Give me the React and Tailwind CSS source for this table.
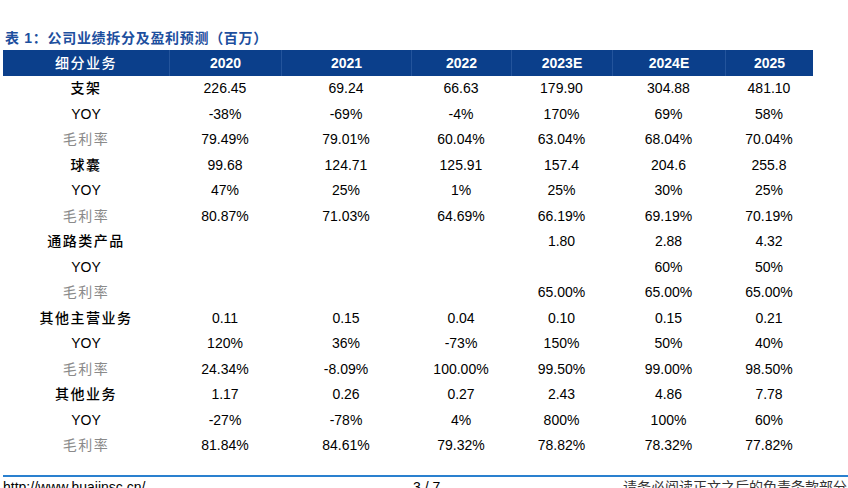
const cols = ["2020", "2021", "2022", "2023E", "2024E", "2025"];

const rows = [
  { label: "支架", type: "cat", v: ["226.45", "69.24", "66.63", "179.90", "304.88", "481.10"] },
  { label: "YOY", type: "yoy", v: ["-38%", "-69%", "-4%", "170%", "69%", "58%"] },
  { label: "毛利率", type: "gm", v: ["79.49%", "79.01%", "60.04%", "63.04%", "68.04%", "70.04%"] },
  { label: "球囊", type: "cat", v: ["99.68", "124.71", "125.91", "157.4", "204.6", "255.8"] },
  { label: "YOY", type: "yoy", v: ["47%", "25%", "1%", "25%", "30%", "25%"] },
  { label: "毛利率", type: "gm", v: ["80.87%", "71.03%", "64.69%", "66.19%", "69.19%", "70.19%"] },
  { label: "通路类产品", type: "cat", v: ["", "", "", "1.80", "2.88", "4.32"] },
  { label: "YOY", type: "yoy", v: ["", "", "", "", "60%", "50%"] },
  { label: "毛利率", type: "gm", v: ["", "", "", "65.00%", "65.00%", "65.00%"] },
  { label: "其他主营业务", type: "cat", v: ["0.11", "0.15", "0.04", "0.10", "0.15", "0.21"] },
  { label: "YOY", type: "yoy", v: ["120%", "36%", "-73%", "150%", "50%", "40%"] },
  { label: "毛利率", type: "gm", v: ["24.34%", "-8.09%", "100.00%", "99.50%", "99.00%", "98.50%"] },
  { label: "其他业务", type: "cat", v: ["1.17", "0.26", "0.27", "2.43", "4.86", "7.78"] },
  { label: "YOY", type: "yoy", v: ["-27%", "-78%", "4%", "800%", "100%", "60%"] },
  { label: "毛利率", type: "gm", v: ["81.84%", "84.61%", "79.32%", "78.82%", "78.32%", "77.82%"] },
];

const grid = "grid grid-cols-[166px_112px_130px_100px_101px_113px_88px]";

// category rows are darker, margins are grey
const labelClass = {
  cat: "text-black font-medium tracking-[1.5px]",
  yoy: "text-black",
  gm: "text-[#8a8a8a] tracking-[1.5px]",
};

const App = () => {
  return (
    <div className="w-[848px] h-[488px] overflow-hidden bg-white font-['Liberation_Sans','Noto_Sans_CJK_SC',sans-serif]">
      <div className="pt-[28px] pl-[5px] h-[50px] text-[14px] leading-[20px] font-bold tracking-[0.7px] text-[#1d4f9e]">
        表 1：公司业绩拆分及盈利预测（百万）
      </div>
      <div className="ml-[3px] w-[810px]">
        <div className={`${grid} h-[26px] bg-[#0b3f8b] text-white text-[14px]`}>
          <div className="flex items-center justify-center font-medium tracking-[1.5px]">细分业务</div>
          {cols.map((c) => (
            <div key={c} className="flex items-center justify-center font-bold border-l border-[#23549c]">
              {c}
            </div>
          ))}
        </div>
        {rows.map((r, i) => (
          <div key={i} className={`${grid} h-[25.5px] text-[14px] text-black`}>
            <div className={`flex items-center justify-center ${labelClass[r.type]}`}>
              {r.label}
            </div>
            {r.v.map((v, j) => (
              <div key={j} className="flex items-center justify-center">
                {v}
              </div>
            ))}
          </div>
        ))}
      </div>
      <div className="mt-[16px] ml-[3px] border-t-2 border-[#2a80cf] flex items-start text-[14px] leading-[18px] text-black pt-[1px]">
        <div className="w-[410px]">http://www.huajinsc.cn/</div>
        <div className="w-[210px]">3 / 7</div>
        <div className="whitespace-nowrap text-[#333]">请务必阅读正文之后的免责条款部分</div>
      </div>
    </div>
  );
};

export default App;
